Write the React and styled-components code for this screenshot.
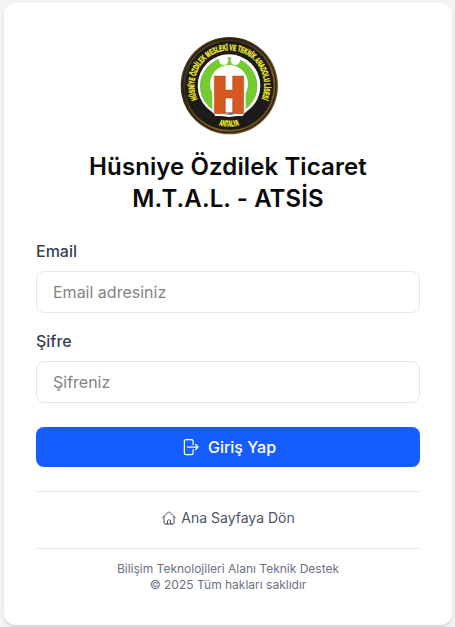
import React from "react";
import styled, { createGlobalStyle } from "styled-components";

const GlobalStyle = createGlobalStyle`
  *, *::before, *::after { box-sizing: border-box; }
  body {
    margin: 0;
    background: #f3f4f6;
    color: #0a0a0a;
    font-family: Inter, "Liberation Sans", sans-serif;
    overflow: hidden;
  }
`;

const Page = styled.main`
  height: 627px;
  padding: 3px 3px 2px 4px;
`;

const Card = styled.section`
  width: 448px;
  height: 622px;
  padding: 32px;
  background: #fff;
  border-radius: 12px;
  box-shadow: 0 4px 6px -1px rgba(0, 0, 0, 0.1), 0 2px 4px -2px rgba(0, 0, 0, 0.1);
`;

const Header = styled.header`
  display: flex;
  flex-direction: column;
  align-items: center;
  gap: 16px;
  margin-bottom: 24px;
`;

const Emblem = styled.svg`
  display: block;
  width: 100px;
  height: 100px;
`;

const Title = styled.h1`
  margin: 0;
  width: 320px;
  font-size: 24px;
  line-height: 32px;
  font-weight: 620;
  letter-spacing: 0.1px;
  text-align: center;
`;

const Form = styled.form`
  display: flex;
  flex-direction: column;
`;

const Field = styled.label`
  display: flex;
  flex-direction: column;
  gap: 8px;
  margin-bottom: ${(p) => (p.$last ? 24 : 16)}px;
`;

const FieldLabel = styled.span`
  font-size: 16px;
  line-height: 24px;
  font-weight: 450;
  color: #364153;
`;

const Input = styled.input`
  height: 42px;
  padding: 0 16px;
  border: 1px solid #e5e7eb;
  border-radius: 8px;
  background: #fff;
  color: #0a0a0a;
  font: 400 16px/24px Inter, sans-serif;
  outline: none;
  &::placeholder { color: #848484; opacity: 1; }
`;

const SubmitButton = styled.button`
  display: flex;
  align-items: center;
  justify-content: center;
  gap: 8px;
  height: 40px;
  padding: 0;
  border: 0;
  border-radius: 8px;
  background: #155dfc;
  color: #fff;
  font: 450 16px/24px Inter, sans-serif;
`;

const LineIcon = styled.svg`
  width: ${(p) => p.$size}px;
  height: ${(p) => p.$size}px;
  fill: none;
  stroke: currentColor;
  stroke-width: 1.5;
  stroke-linecap: round;
  stroke-linejoin: round;
`;

const HomeRow = styled.nav`
  display: flex;
  justify-content: center;
  margin-top: 24px;
  padding: 16px 0 20px;
  border-top: 1px solid #e5e7eb;
`;

const HomeLink = styled.a`
  display: flex;
  align-items: center;
  gap: 4px;
  font-size: 14px;
  line-height: 20px;
  color: #4a5565;
`;

const Footer = styled.footer`
  padding-top: 12px;
  border-top: 1px solid #e5e7eb;
  font-size: 12px;
  line-height: 16px;
  text-align: center;
  color: #6a7282;
`;

const FooterLine = styled.div``;

function SchoolEmblem() {
  return (
    <Emblem viewBox="12 15 300 300" role="img">
      <defs>
        <linearGradient id="rim" x1="0" y1="0" x2="1" y2="1">
          <stop offset="0" stopColor="#66583f" />
          <stop offset="0.3" stopColor="#3a2c18" />
          <stop offset="0.65" stopColor="#80622f" />
          <stop offset="1" stopColor="#57401d" />
        </linearGradient>
        <path id="upperArc" d="M 70.5 209.5 A 105 105 0 1 1 261.5 209.5" />
        <path id="lowerArc" d="M 104 273 A 124 124 0 0 0 228 273" />
      </defs>
      <circle cx="166" cy="167" r="146" fill="url(#rim)" />
      <circle cx="166" cy="167" r="140" fill="none" stroke="#2c2110" strokeWidth="4" />
      <circle cx="166" cy="167" r="133" fill="#1d1b1a" />
      <circle cx="165" cy="167" r="94" fill="#fff" />
      <circle cx="164" cy="168" r="85" fill="#74cc30" stroke="#4a9a26" strokeWidth="1.5" />
      <circle cx="165" cy="162" r="57" fill="#fff" />
      <circle cx="149" cy="91" r="14" fill="#fff" />
      <circle cx="184" cy="91" r="14" fill="#fff" />
      <path d="M115 160H215V245L206 258H124L115 245Z" fill="#fff" />
      <path
        d="M121 138H154V180H176V138H209V251H176V204H154V251H121Z"
        fill="#d4581f"
        stroke="#a6481f"
        strokeWidth="1.5"
      />
      <text x="165" y="256" textAnchor="middle" fontFamily="Liberation Sans, sans-serif" fontSize="10" fontWeight="700" fill="#222">1998</text>
      <g fontFamily="Liberation Sans, sans-serif" fontWeight="700" fill="#f4ee30" stroke="#f4ee30" strokeWidth="1.2">
        <text fontSize="25">
          <textPath href="#upperArc" startOffset="2" textLength="414" lengthAdjust="spacingAndGlyphs">HÜSNİYE ÖZDİLEK MESLEKİ VE TEKNİK ANADOLU LİSESİ</textPath>
        </text>
        <text fontSize="25">
          <textPath href="#lowerArc" startOffset="34" textLength="61" lengthAdjust="spacingAndGlyphs">ANTALYA</textPath>
        </text>
      </g>
    </Emblem>
  );
}

export default function App() {
  return (
    <>
      <GlobalStyle />
      <Page>
        <Card>
          <Header>
            <SchoolEmblem />
            <Title>Hüsniye Özdilek Ticaret M.T.A.L. - ATSİS</Title>
          </Header>
          <Form onSubmit={(e) => e.preventDefault()}>
            <Field>
              <FieldLabel>Email</FieldLabel>
              <Input type="email" placeholder="Email adresiniz" />
            </Field>
            <Field $last>
              <FieldLabel>Şifre</FieldLabel>
              <Input type="password" placeholder="Şifreniz" />
            </Field>
            <SubmitButton type="submit">
              <LineIcon $size={20} viewBox="0 0 24 24">
                <path d="M15.75 9V5.25A2.25 2.25 0 0 0 13.5 3h-6a2.25 2.25 0 0 0-2.25 2.25v13.5A2.25 2.25 0 0 0 7.5 21h6a2.25 2.25 0 0 0 2.25-2.25V15m3 0 3-3m0 0-3-3m3 3H9" />
              </LineIcon>
              Giriş Yap
            </SubmitButton>
          </Form>
          <HomeRow>
            <HomeLink>
              <LineIcon $size={16} viewBox="0 0 24 24">
                <path d="m2.25 12 8.954-8.955c.44-.439 1.152-.439 1.591 0L21.75 12M4.5 9.75v10.125c0 .621.504 1.125 1.125 1.125H9.75v-4.875c0-.621.504-1.125 1.125-1.125h2.25c.621 0 1.125.504 1.125 1.125V21h4.125c.621 0 1.125-.504 1.125-1.125V9.75M8.25 21h8.25" />
              </LineIcon>
              Ana Sayfaya Dön
            </HomeLink>
          </HomeRow>
          <Footer>
            <FooterLine>Bilişim Teknolojileri Alanı Teknik Destek</FooterLine>
            <FooterLine>© 2025 Tüm hakları saklıdır</FooterLine>
          </Footer>
        </Card>
      </Page>
    </>
  );
}
